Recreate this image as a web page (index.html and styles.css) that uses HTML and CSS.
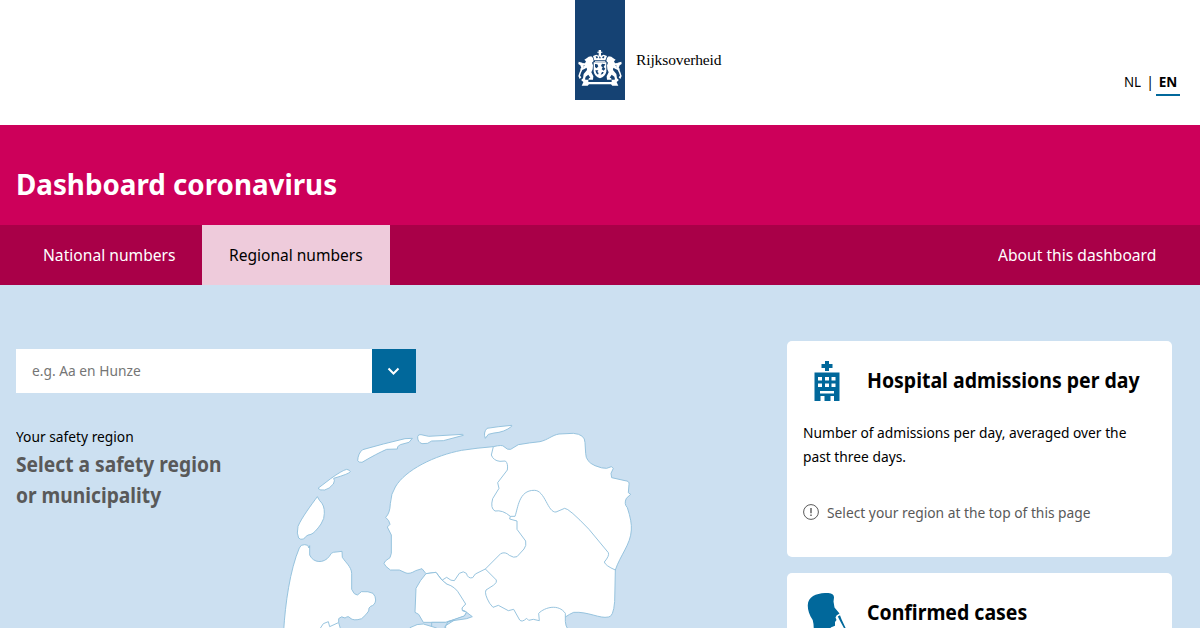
FILE: index.html
```html
<!DOCTYPE html>
<html lang="en">
<head>
<meta charset="utf-8">
<title>Dashboard coronavirus</title>
<link rel="stylesheet" href="styles.css">
</head>
<body>
<header class="top">
  <div class="brand">
    <div class="ribbon">
      <svg class="arms" viewBox="0 0 132 114" fill="#fff">
        <g id="lion">
          <path d="M26 25l6-5 8-1 5 5 2 9-5 5 3 8-1 12-4 9 6 12-1 10H31l2-5 4-1-6-9-8 6-2 8 5 6H12l-2-5 5-4 2-13 10-12-1-7-8 5-9 3-3-5 9-3 5-7-8-2 1-5 8 1 3-6-5-5z"/>
          <path d="M2 35l11 3 5 10-4 10-5 10-3 9 4 5-5 5-4-9 4-12 5-12-3-8-6-4z"/>
        </g>
        <use href="#lion" transform="matrix(-1 0 0 1 132 0)"/>
        <path fill-rule="evenodd" d="M47 37h38v28q-3 14-19 20-16-6-19-20zM51 42v9l5 4 5-6-3-6zM72 41l-3 7 5 4-3 6 6 4 5-6-5-5 5-8zM52 61l3 9 5 4 2-5-4-3 3-5zM72 66l-4 8 7-3 2-5z"/>
        <path fill-rule="evenodd" d="M49 31l-4-13 10-4 7 3V8h-4V5h4V0h7v5h4v3h-4v9l8-3 10 4-5 13zM53 19l2 6 5-1-2-5zM65 18l-2 7h6zM75 19l-3 5 6 1 1-6zM51 33h31v2H51z"/>
        <path d="M13 89h18v7h70v-7h18l-3 8 5 10h-18l-4-4H33l-4 4H11l5-10z"/>
      </svg>
    </div>
    <span class="wordmark">Rijksoverheid</span>
  </div>
  <div class="lang"><span class="nl">NL</span><span class="bar">|</span><b>EN</b></div>
</header>
<div class="hero"><h1 class="t title">Dashboard coronavirus</h1></div>
<nav class="nav">
  <a class="tab national"><span class="t">National numbers</span></a>
  <a class="tab regional"><span class="t">Regional numbers</span></a>
  <a class="tab about"><span class="t">About this dashboard</span></a>
</nav>
<main class="main">
  <section class="left">
    <div class="combo">
      <div class="field"><span class="t">e.g. Aa en Hunze</span></div>
      <div class="toggle"><svg width="14" height="10" viewBox="0 0 14 10" fill="none" stroke="#fff" stroke-width="2"><path d="M1.500 2.500l5 5 5-5"/></svg></div>
    </div>
    <div class="region-row">
      <div class="region">
        <p class="label"><span class="t">Your safety region</span></p>
        <h2 class="pick t">Select a safety region<br>or municipality</h2>
      </div>
      <svg class="map" viewBox="0 0 1110 624">
        <path d="M41 632C46 550 60 450 88 384Q92 373 104 374L113 376 117 384 119 377 119 405C130 430 162 431 178 409Q184 397 190 397L216 394 217 412C227 428 244 440 245 460L245 508Q252 525 262 525 268 521 274 515 296 513 309 520 317 529 317 540 316 555 302 559 295 562 296 573 290 583 275 596 251 604 240 594 236 586 225 594 214 586 206 596V608L213 632Z"/>
        <path d="M142 230L149 242Q164 255 163 280 164 295 153 312 135 338 123 343 113 344 107 350L101 357Q91 360 86 354 79 342 84 319C95 293 125 253 142 230Z"/>
        <path d="M144 205L182 176Q215 152 230 148 240 150 241 155 239 161 191 175 196 181 190 192 178 207 164 210 150 212 144 205Z"/>
        <path d="M263 122Q264 100 278 89L340 72 405 56 427 55 417 67 391 74 383 80 382 87 350 88Q320 101 276 127 266 128 263 122Z"/>
        <path d="M443 50Q445 42 453 44L476 49 578 43 580 46 520 62 485 63Q475 73 456 71 442 66 443 50Z"/>
        <path d="M646 55Q639 38 651 25 681 20 725 16L725 19Q703 37 672 39L655 43Z"/>
        <path d="M347 292Q360 280 361 251 363 220 376 201C405 150 495 106 575 91Q620 84 670 80 698 73 702 80 713 91 722 88L745 74Q780 68 810 65C835 59 845 46 867 42L910 40Q945 43 945 68L947 100Q947 125 975 137 997 146 1010 145L1024 140 1030 145 1023 160 1025 173 1065 182Q1079 183 1077 193L1075 218 1082 223 1069 235Q1061 252 1072 263 1086 305 1084 330C1082 373 1050 407 1036 450L1034 545Q1030 592 1015 591C990 597 954 574 911 577Q899 582 886 591V605Q886 617 896 632H527V617L590 577 585 573 575 570 576 562 585 553 570 532Q560 508 540 499L520 485 498 457 468 461 456 446 437 452Q419 463 408 459L388 450 361 450Q344 438 342 430 343 423 360 413L364 400V345L352 321 360 313 356 302Z"/>
        <path d="M468 461L498 457Q512 480 530 492 557 500 570 525L587 552 576 564 577 572 590 577 583 588 530 607H460L446 583 435 577 438 505Q450 481 468 461Z"/>
        <path class="water" d="M590 577L607 590 590 596 535 604 525 620V632H485V607H527L583 588Z"/>
        <path d="M150 626L160 611 175 605 179 620 205 608M420 623Q443 610 460 612L500 624V640H420Z"/>
        <g class="borders">
          <path d="M670 80L664 105Q670 122 690 124L706 123Q715 130 712 150L683 188 687 205 668 236Q660 265 675 273 698 269 721 289L719 297 741 303 741 328 767 363Q770 377 762 387L741 410Q732 415 718 406 706 394 692 401L646 447 616 462 608 473Q594 477 589 460 581 451 568 460L553 482Q544 484 530 472L517 480"/>
          <path d="M721 289H735C744 265 746 210 793 211C825 210 833 279 858 276L884 265Q897 265 957 328L1015 398Q1019 407 1003 426 1006 437 1036 450"/>
          <path d="M646 447L679 480Q683 487 670 496L648 510Q642 521 659 550L669 562 685 556 715 572 731 568 749 600Q756 608 770 595L776 601 790 598 808 602 806 580C825 561 866 551 886 580V591"/>
        </g>
      </svg>
    </div>
  </section>
  <aside class="cards">
    <article class="card">
      <div class="card-head">
        <svg class="icon" viewBox="0 0 48 48" fill="#01689b"><path fill-rule="evenodd" d="M22 4h4v3h3.500v4h-3.500v3h-4v-3h-3.500V7h3.500zM11.500 15.500h25v28.500h-5.500v-5h-3.500v5h-6v-5h-4v5h-6zM15 20v3.500h4v-3.500zM22 20v3.500h4v-3.500zM28.500 20v3.500h4v-3.500zM15 26.500v3.500h4v-3.500zM22 26.500v3.500h4v-3.500zM28.500 26.500v3.500h4v-3.500zM17 34v2.500h14v-2.500z"/></svg>
        <h3 class="t">Hospital admissions per day</h3>
      </div>
      <p class="copy"><span class="t">Number of admissions per day, averaged over the<br>past three days.</span></p>
      <div class="hint"><svg width="16" height="16" viewBox="0 0 16 16" fill="none" stroke="#595959"><circle cx="8" cy="8" r="7.400"/><path d="M8 4v5.200M8 10.400v1.500" stroke-width="1.400"/></svg><span class="t">Select your region at the top of this page</span></div>
    </article>
    <article class="card">
      <div class="card-head">
        <svg class="icon" viewBox="0 0 48 48" fill="#01689b"><path d="M11 44L10.500 35 9.700 31C6 26 4.600 20 4.800 16 5 8 13 4.300 22 4 27 3.700 31 4.500 31 8.500L30.500 12.500 31.500 18.500 36.500 24.500 33.500 26.500 32.500 28.500 33.500 31 32 33 32 36.700 27.700 38.500 28 44zM34.800 27.500l2.200-1.200 1.500 4 4.500 9.500-1.200.8-5-9z"/></svg>
        <h3 class="t">Confirmed cases</h3>
      </div>
    </article>
  </aside>
</main>
</body>
</html>
```
FILE: styles.css
```css
* { box-sizing: border-box; }
html, body { margin: 0; height: 628px; overflow: hidden; }
body { font-family: "Noto Sans", "Open Sans", sans-serif; font-size: 15px; color: #000; background: #fff; }
h1, h2, h3, p { margin: 0; }
/* Narrows the interface typeface horizontally */
.t { display: inline-block; transform-origin: 0 0; transform: scaleX(.919); }
.top { height: 125px; display: grid; grid-template-columns: 575px 1fr auto; }
.brand { grid-column: 2; display: flex; gap: 11px; }
.ribbon { width: 50px; height: 100px; background: #154273; padding: 50px 3px 0; }
.arms { display: block; width: 44px; height: 38px; }
.wordmark { font: 15.5px/22px "Liberation Serif", serif; letter-spacing: -.12px; padding-top: 49px; }
.lang { display: flex; padding: 70px 20px 0 0; height: 96px; line-height: 24px; font-size: 14px; }
.lang .nl { transform: scaleX(.95); transform-origin: 100% 0; }
.lang .bar { margin: 0 2px 0 5px; }
.lang b { width: 24px; text-align: center; border-bottom: 2px solid #01689b; font-size: 13.5px; }
.hero { height: 100px; background: #cd005a; color: #fff; padding: 37px 16px 0; }
.title { font-size: 29px; line-height: 44px; white-space: nowrap; transform: scaleX(.957); }
.nav { height: 60px; background: #a90048; color: #fff; display: flex; padding: 0 16px; font-size: 17px; line-height: 60px; white-space: nowrap; }
.tab { padding-left: 27px; }
.national { width: 186px; }
.regional { width: 188px; background: #eecbdb; color: #000; }
.regional .t { transform: scaleX(.914); }
.about { margin-left: auto; width: 213px; }
.main { height: 343px; background: #cce0f1; display: flex; justify-content: space-between; padding: 56px 28px 0 16px; overflow: hidden; }
.left { padding-top: 8px; }
.combo { width: 400px; height: 44px; display: flex; background: #fff; }
.field { flex: 1; padding-left: 16px; line-height: 42px; color: #757575; font-size: 14.5px; }
.field .t, .label .t { transform: scaleX(.95); }
.toggle { width: 44px; background: #01689b; display: flex; align-items: center; justify-content: center; }
.region-row { display: flex; padding-top: 27px; }
.region { width: 254px; padding-top: 4px; white-space: nowrap; }
.label { height: 25px; line-height: 24px; font-size: 14.5px; }
.pick { font-size: 20.5px; line-height: 31px; color: #595959; transform: scaleX(.937); }
.map { width: 370px; height: 208px; display: block; fill: #fff; stroke: #90bfdb; stroke-width: 2.8; }
.map .borders { fill: none; }
.map .water { fill: #cce0f1; }
.cards { width: 385px; display: flex; flex-direction: column; gap: 16px; }
.card { height: 216px; flex: none; background: #fff; border-radius: 5px; padding: 16px; white-space: nowrap; }
.card-head { display: flex; gap: 16px; height: 48px; }
.icon { width: 48px; height: 48px; flex: none; }
.card h3 { font-size: 20.5px; line-height: 46px; transform: scaleX(.95); }
.copy { height: 48px; margin-top: 15px; line-height: 24px; }
.hint { display: flex; gap: 8px; align-items: center; margin-top: 32px; height: 24px; color: #595959; }
```
